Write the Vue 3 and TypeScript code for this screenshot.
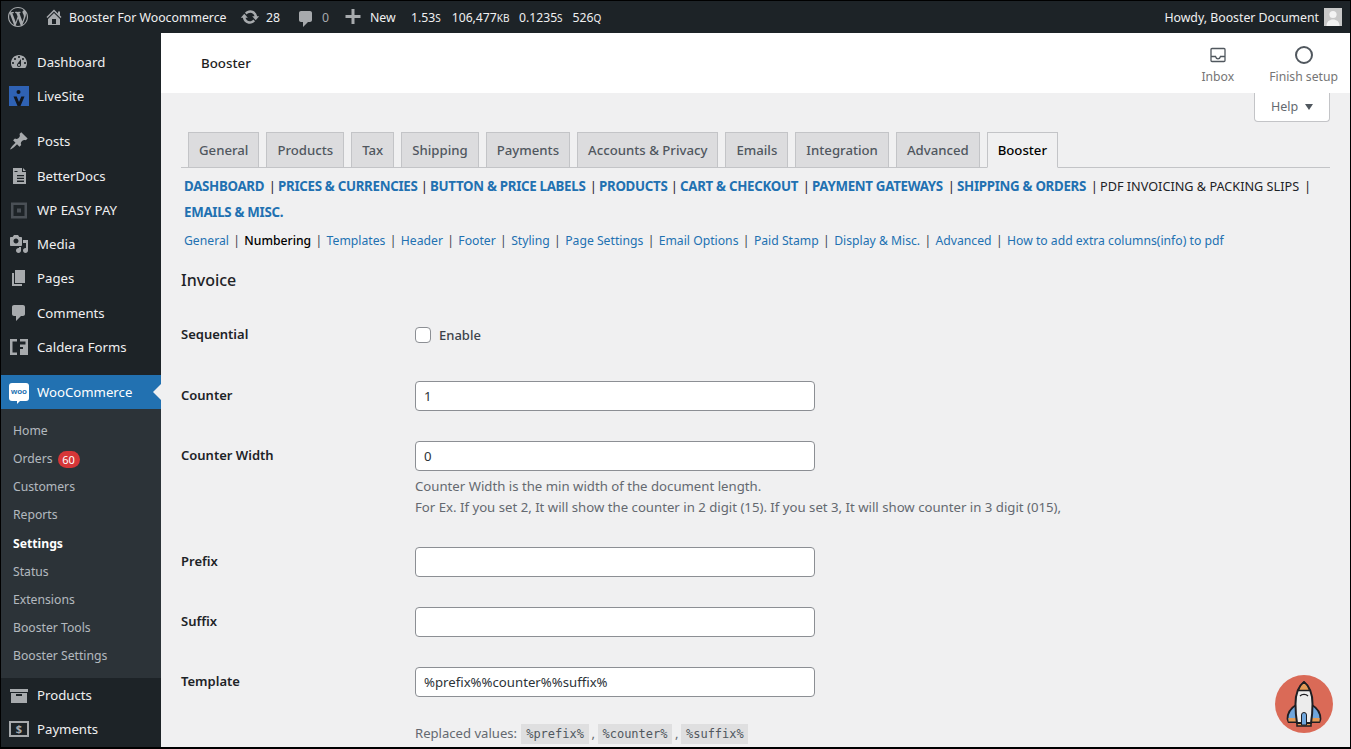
<script setup lang="ts">
const d = {
  dashboard: 'M3.76 16h12.48c1.1-1.37 1.76-3.11 1.76-5 0-4.42-3.58-8-8-8s-8 3.58-8 8c0 1.89.66 3.63 1.76 5zM10 4c.55 0 1 .45 1 1s-.45 1-1 1-1-.45-1-1 .45-1 1-1zM6 6c.55 0 1 .45 1 1s-.45 1-1 1-1-.45-1-1 .45-1 1-1zm8 0c.55 0 1 .45 1 1s-.45 1-1 1-1-.45-1-1 .45-1 1-1zm-5.37 5.55L12 7v6c0 1.1-.9 2-2 2s-2-.9-2-2c0-.57.24-1.08.63-1.45zM4 10c.55 0 1 .45 1 1s-.45 1-1 1-1-.45-1-1 .45-1 1-1zm12 0c.55 0 1 .45 1 1s-.45 1-1 1-1-.45-1-1 .45-1 1-1zm-5 3c0-.55-.45-1-1-1s-1 .45-1 1 .45 1 1 1 1-.45 1-1z',
  pin: 'M10.44 3.02l1.82-1.82 6.36 6.35-1.83 1.82c-1.05-.68-2.48-.57-3.41.36l-.75.75c-.92.93-1.04 2.35-.35 3.41l-1.83 1.82-2.41-2.41-2.8 2.79c-.42.42-3.38 2.71-3.8 2.29s1.86-3.39 2.28-3.81l2.79-2.79L4.1 9.36l1.83-1.82c1.05.69 2.48.57 3.4-.36l.75-.75c.93-.92 1.05-2.35.36-3.41z',
  doc: 'M4 2h9v4h4v12H4V2zm10 0l3 3h-3V2zM8 9v1.300h7V9H8zm0 2.800v1.300h7v-1.300H8zm0 2.800v1.300h7v-1.300H8zM5.500 5v1h3V5h-3z',
  square: 'M2 2.500h16v16H2v-16zm2.500 2.500v11h11V5h-11zm3.500 3.500h4v4H8v-4z',
  media: 'M13 11V4c0-.55-.45-1-1-1h-1.67L9 1H5L3.67 3H2c-.55 0-1 .45-1 1v7c0 .55.45 1 1 1h10c.55 0 1-.45 1-1zM7 4.500c1.38 0 2.500 1.120 2.500 2.500S8.380 9.500 7 9.500 4.500 8.380 4.500 7 5.620 4.500 7 4.500zM14 6h5v10.500c0 1.380-1.120 2.500-2.500 2.500S14 17.880 14 16.500s1.120-2.500 2.500-2.500c.17 0 .34.02.5.05V9h-3V6zm-4 8.050V13h2v3.500c0 1.380-1.120 2.500-2.500 2.500S7 17.880 7 16.500 8.120 14 9.500 14c.17 0 .34.02.5.05z',
  page: 'M6 15V2h10v13H6zm-1 1h8v2H3V5h2v11z',
  comment: 'M5 2h9c1.100 0 2 .9 2 2v7c0 1.100-.9 2-2 2h-2l-5 5v-5H5c-1.100 0-2-.9-2-2V4c0-1.100.9-2 2-2z',
  caldera: 'M1 2h7v2.500H3.500v11H8V18H1V2zm10 0h8v16h-8v-6h3v-2h-3V7.500h5.500v-3H11V2z',
  archive: 'M19 4v3H1V4h18zM2 8h16v10H2V8zm11 3V9H7v2h6z',
}

const top1 = [
  { label: 'Dashboard', path: d.dashboard },
  { label: 'LiveSite', path: '' },
]
const top2 = [
  { label: 'Posts', path: d.pin },
  { label: 'BetterDocs', path: d.doc },
  { label: 'WP EASY PAY', path: d.square, dim: true },
  { label: 'Media', path: d.media },
  { label: 'Pages', path: d.page },
  { label: 'Comments', path: d.comment },
  { label: 'Caldera Forms', path: d.caldera },
]
const sub = ['Home', 'Orders', 'Customers', 'Reports', 'Settings', 'Status', 'Extensions', 'Booster Tools', 'Booster Settings']
const tabs = ['General', 'Products', 'Tax', 'Shipping', 'Payments', 'Accounts & Privacy', 'Emails', 'Integration', 'Advanced', 'Booster']
const sections = [
  { label: 'DASHBOARD', w: 94 },
  { label: 'PRICES & CURRENCIES', w: 152 },
  { label: 'BUTTON & PRICE LABELS', w: 169 },
  { label: 'PRODUCTS', w: 81 },
  { label: 'CART & CHECKOUT', w: 132 },
  { label: 'PAYMENT GATEWAYS', w: 145 },
  { label: 'SHIPPING & ORDERS', w: 143 },
]
const subLinks = ['General', 'Numbering', 'Templates', 'Header', 'Footer', 'Styling', 'Page Settings', 'Email Options', 'Paid Stamp', 'Display & Misc.', 'Advanced', 'How to add extra columns(info) to pdf']
</script>

<template>
  <div class="frame">
    <header class="adminbar">
      <svg class="wp" viewBox="0 0 20 20"><path fill-rule="evenodd" d="M20 10c0-5.51-4.49-10-10-10C4.48 0 0 4.49 0 10c0 5.52 4.48 10 10 10 5.51 0 10-4.48 10-10zM7.78 15.37L4.37 6.22c.55-.02 1.17-.08 1.17-.08.5-.06.44-1.13-.06-1.11 0 0-1.45.11-2.37.11-.18 0-.37 0-.58-.01C4.12 2.69 6.87 1.11 10 1.11c2.33 0 4.45.87 6.05 2.34-.68-.11-1.65.39-1.65 1.58 0 .74.45 1.36.9 2.1.35.61.55 1.36.55 2.46 0 1.49-1.4 5-1.4 5l-3.03-8.37c.54-.02.82-.17.82-.17.5-.05.44-1.25-.06-1.22 0 0-1.44.12-2.38.12-.87 0-2.33-.12-2.33-.12-.5-.03-.56 1.2-.06 1.22l.92.08 1.26 3.41zM17.41 10c.24-.64.74-1.87.43-4.25.7 1.29 1.05 2.71 1.05 4.25 0 3.29-1.73 6.24-4.4 7.78.97-2.59 1.94-5.2 2.92-7.78zM6.1 18.09C3.12 16.65 1.11 13.53 1.11 10c0-1.3.23-2.48.72-3.59C3.25 10.3 4.67 14.2 6.1 18.09zm4.03-6.63l2.58 6.98c-.86.29-1.76.45-2.71.45-.79 0-1.57-.11-2.29-.33.81-2.38 1.62-4.74 2.42-7.1z"/></svg>
      <svg class="bar-ico home" viewBox="0 0 20 20"><path fill-rule="evenodd" d="M16 8.5l1.53 1.53-1.06 1.06L10 4.62l-6.47 6.47-1.06-1.06L10 2.5l4 4v-2h2v4zm-6-2.46l6 5.99V18H4v-5.97zM12 17v-5H8v5h4z"/></svg>
      <span class="site">Booster For Woocommerce</span>
      <svg class="bar-ico upd" viewBox="0 0 20 20"><path d="M10.2 3.28c3.53 0 6.43 2.61 6.92 6h2.08l-3.5 4-3.5-4h2.32c-.45-1.97-2.21-3.44-4.32-3.44-1.45 0-2.73.71-3.54 1.78L4.95 5.66C6.23 4.2 8.11 3.28 10.2 3.28zm-.4 13.44c-3.52 0-6.43-2.61-6.92-6H.8l3.5-4c1.17 1.33 2.33 2.67 3.5 4H5.48c.45 1.97 2.21 3.44 4.32 3.44 1.45 0 2.73-.71 3.54-1.78l1.71 1.95c-1.28 1.46-3.15 2.39-5.25 2.39z"/></svg>
      <span class="count">28</span>
      <svg class="bar-ico cmt" viewBox="0 0 20 20"><path :d="d.comment"/></svg>
      <span class="zero">0</span>
      <svg class="bar-ico plus" viewBox="0 0 20 20"><path d="M17.500 8v3h-6v6h-3v-6h-6V8h6V2h3v6h6z"/></svg>
      <span class="new">New</span>
      <span class="stat s1">1.53<small>S</small></span>
      <span class="stat s2">106,477<small>KB</small></span>
      <span class="stat s3">0.1235<small>S</small></span>
      <span class="stat s4">526<small>Q</small></span>
      <span class="howdy">Howdy, Booster Document</span>
      <svg class="avatar" viewBox="0 0 18 18"><rect width="18" height="18" fill="#c8c8c8"/><circle cx="9" cy="6.500" r="3.600" fill="#f3f3f3"/><path d="M2.500 18c0-4.500 3-6.600 6.500-6.600s6.500 2.100 6.500 6.600z" fill="#f3f3f3"/></svg>
    </header>

    <div class="below">
      <aside class="side">
        <nav class="group">
          <div v-for="m in top1" :key="m.label" class="item">
            <span class="ico">
              <svg v-if="m.path" viewBox="0 0 20 20"><path fill-rule="evenodd" :d="m.path"/></svg>
              <svg v-else class="live" viewBox="0 0 20 20"><rect width="20" height="20" fill="#2f62b4"/><circle cx="9.500" cy="6" r="2" fill="#12161d"/><path d="M4.500 10.500h3.200l2.300 5.500 2.300-5.500h3.200L11.500 20h-3z" fill="#12161d"/></svg>
            </span>
            <span>{{ m.label }}</span>
          </div>
        </nav>
        <nav class="group">
          <div v-for="m in top2" :key="m.label" class="item">
            <span class="ico" :class="{ dim: m.dim }"><svg viewBox="0 0 20 20"><path fill-rule="evenodd" :d="m.path"/></svg></span>
            <span>{{ m.label }}</span>
          </div>
        </nav>
        <nav class="group">
          <div class="item current">
            <span class="woo"><b>woo</b></span>
            <span>WooCommerce</span>
          </div>
          <ul class="submenu">
            <li v-for="s in sub" :key="s" :class="{ on: s === 'Settings' }">
              {{ s }}<span v-if="s === 'Orders'" class="badge">60</span>
            </li>
          </ul>
          <div class="item">
            <span class="ico"><svg viewBox="0 0 20 20"><path fill-rule="evenodd" :d="d.archive"/></svg></span>
            <span>Products</span>
          </div>
          <div class="item">
            <span class="ico pay"><b>$</b></span>
            <span>Payments</span>
          </div>
        </nav>
      </aside>

      <main class="main">
        <div class="wc-head">
          <span class="wc-title">Booster</span>
          <div class="wc-act inbox">
            <svg viewBox="0 0 18 18" width="18" height="18" fill="none" stroke="#50575e" stroke-width="1.300"><path d="M2 3.500a1 1 0 0 1 1-1h12a1 1 0 0 1 1 1v11a1 1 0 0 1-1 1H3a1 1 0 0 1-1-1zM2 10.500h4.500c.5 2 1 2.300 2.500 2.300s2-.3 2.500-2.300H16"/></svg>
            <span>Inbox</span>
          </div>
          <div class="wc-act setup">
            <svg viewBox="0 0 20 20" width="20" height="20" fill="none" stroke="#50575e" stroke-width="2"><circle cx="10" cy="10" r="8"/></svg>
            <span>Finish setup</span>
          </div>
        </div>

        <div class="wrap">
          <div class="help-row"><div class="help">Help<i class="caret"></i></div></div>

          <div class="tabs">
            <span v-for="t in tabs" :key="t" class="tab" :class="{ active: t === 'Booster' }">{{ t }}</span>
          </div>

          <div class="sections">
            <div class="sec-line">
              <span v-for="s in sections" :key="s.label" class="sec-cell" :style="{ width: s.w + 'px' }"><a class="sec">{{ s.label }}</a><span class="pipe">|</span></span>
              <span class="sec-cur">PDF INVOICING &amp; PACKING SLIPS</span><span class="pipe last">|</span>
            </div>
            <div class="sec-line"><a class="sec">EMAILS &amp; MISC.</a></div>
          </div>

          <div class="sublinks">
            <template v-for="(l, i) in subLinks" :key="l">
              <span v-if="i > 0" class="subpipe">|</span>
              <a class="sub" :class="{ cur: l === 'Numbering' }">{{ l }}</a>
            </template>
          </div>

          <h2 class="h2">Invoice</h2>

          <div class="form">
            <div class="row first">
              <label class="lab">Sequential</label>
              <div class="check"><span class="box"></span><span class="en">Enable</span></div>
            </div>
            <div class="row">
              <label class="lab">Counter</label>
              <div class="field">1</div>
            </div>
            <div class="row">
              <label class="lab">Counter Width</label>
              <div>
                <div class="field">0</div>
                <p class="desc">Counter Width is the min width of the document length.<br />For Ex. If you set 2, It will show the counter in 2 digit (15). If you set 3, It will show counter in 3 digit (015),</p>
              </div>
            </div>
            <div class="row">
              <label class="lab">Prefix</label>
              <div class="field"></div>
            </div>
            <div class="row">
              <label class="lab">Suffix</label>
              <div class="field"></div>
            </div>
            <div class="row">
              <label class="lab">Template</label>
              <div>
                <div class="field">%prefix%%counter%%suffix%</div>
                <p class="replaced">Replaced values: <code class="c1">%prefix%</code><span class="comma">,</span><code>%counter%</code><span class="comma">,</span><code>%suffix%</code></p>
              </div>
            </div>
          </div>
        </div>

        <div class="rocket">
          <svg viewBox="0 0 58 58" width="58" height="58">
            <circle cx="29" cy="29" r="29" fill="#da6a57"/>
            <path d="M21 30c-5 3-8.500 8-8.500 14l1 3h9zM37 30c5 3 8.500 8 8.500 14l-1 3h-9z" fill="#6fa6dc" stroke="#1e1e22" stroke-width="1.800" stroke-linejoin="round"/>
            <path d="M13.500 43h9v3.500h-9zM35.500 43h9v3.500h-9z" fill="#e39a55"/>
            <path d="M22 47h14v4H22z" fill="#e39a55" stroke="#1e1e22" stroke-width="1.500"/>
            <path d="M29 7c-6 4.500-8.500 13-8.500 22 0 7 .5 13 1.500 19h14c1-6 1.500-12 1.500-19 0-9-2.500-17.500-8.500-22z" fill="#ececec" stroke="#1e1e22" stroke-width="2" stroke-linejoin="round"/>
            <path d="M29 7c-2.500 2-4.500 5-5.800 8.500h11.600C33.500 12 31.500 9 29 7z" fill="#e39a55" stroke="#1e1e22" stroke-width="1.500" stroke-linejoin="round"/>
            <path d="M25 21c2-2.200 6-2.200 8 0" fill="none" stroke="#1e1e22" stroke-width="1.300"/>
            <path d="M26.500 50V40a2.500 2.500 0 0 1 5 0v10z" fill="#6fa6dc" stroke="#1e1e22" stroke-width="1"/>
          </svg>
        </div>
      </main>
    </div>
  </div>
</template>

<style>
html, body { margin: 0; padding: 0; overflow: hidden; background: #f0f0f1; }
</style>

<style scoped>
.frame {
  box-sizing: border-box;
  width: 1351px;
  height: 749px;
  overflow: hidden;
  border: 1px solid #000;
  border-bottom-width: 2px;
  display: flex;
  flex-direction: column;
  font-family: "Noto Sans", "Open Sans", sans-serif;
  font-size: 13px;
  color: #3c434a;
  background: #f0f0f1;
}
.adminbar {
  height: 32px;
  flex: none;
  background: #1d2327;
  color: #f0f0f1;
  display: flex;
  align-items: center;
  font-size: 12.300px;
  white-space: nowrap;
}
.adminbar svg { fill: #a7aaad; flex: none; }
.wp { width: 20px; height: 20px; margin-left: 7px; }
.bar-ico { width: 20px; height: 20px; }
.home { margin-left: 16px; }
.site { margin-left: 5px; width: 171px; }
.count { margin-left: 6px; width: 30px; }
.upd { width: 20px; }
.cmt { margin-top: 3px; }
.zero { margin-left: 6px; width: 21px; color: #a7aaad; }
.new { margin-left: 7px; width: 41px; }
.stat { font-size: 12.200px; }
.stat small { font-size: 10px; }
.s2 { margin-left: 11px; }
.s3 { margin-left: 9.500px; }
.s4 { margin-left: 10px; }
.howdy { margin-left: auto; margin-right: 5px; }
.avatar { width: 18px; height: 18px; margin-right: 8px; }

.below { flex: 1; min-height: 0; display: flex; }
.side {
  width: 160px;
  flex: none;
  background: #1d2327;
  padding-top: 12px;
  color: #f0f0f1;
  font-size: 13.200px;
}
.group { margin-bottom: 10.500px; }
.item { height: 34.300px; display: flex; align-items: center; }
.ico { width: 36px; height: 20px; padding-left: 8px; box-sizing: border-box; flex: none; display: flex; }
.ico svg { width: 20px; height: 20px; fill: #a7aaad; }
.ico.dim svg { fill: #4a5056; }
.pay b {
  box-sizing: border-box;
  width: 20px;
  height: 16px;
  margin-top: 2px;
  border: 2px solid #a7aaad;
  color: #a7aaad;
  font-size: 11px;
  line-height: 12px;
  text-align: center;
}
.current {
  background: #2271b1;
  color: #fff;
  position: relative;
}
.current::after {
  content: "";
  position: absolute;
  right: 0;
  top: 9px;
  border: 8px solid transparent;
  border-right-color: #f0f0f1;
  border-left-width: 0;
}
.woo {
  width: 20px;
  height: 18px;
  margin: 0 8px 0 8px;
  background: #fff;
  border-radius: 3px;
  display: flex;
  align-items: center;
  justify-content: center;
  position: relative;
}
.woo b { color: #2271b1; font-size: 8px; line-height: 1; font-family: "Liberation Sans", sans-serif; }
.woo::after {
  content: "";
  position: absolute;
  left: 8px;
  bottom: -3px;
  border-top: 3px solid #fff;
  border-right: 3px solid transparent;
}
.submenu {
  list-style: none;
  margin: 0;
  padding: 8px 0 7.500px;
  background: #2c3338;
  font-size: 12.200px;
  color: rgba(240, 246, 252, 0.7);
}
.submenu li { height: 28.150px; line-height: 28px; padding-left: 12px; display: flex; align-items: center; }
.submenu li.on { color: #fff; font-weight: 700; }
.badge {
  margin-left: 5px;
  width: 22px;
  height: 17px;
  border-radius: 9px;
  background: #d63638;
  color: #fff;
  font-size: 11px;
  line-height: 17px;
  text-align: center;
}

.main { flex: 1; min-width: 0; position: relative; }
.wc-head {
  height: 60px;
  background: #fff;
  display: flex;
  align-items: flex-start;
}
.wc-title { margin: 21px 0 0 40px; color: #1e1e1e; font-size: 13.300px; font-weight: 500; flex: 1; line-height: 18px; }
.wc-act {
  display: flex;
  flex-direction: column;
  align-items: center;
  color: #757575;
  font-size: 12.200px;
  padding-top: 12px;
}
.wc-act span { line-height: 18px; }
.wc-act.inbox { margin-right: 35px; padding-top: 13px; }
.wc-act.inbox span { margin-top: 4px; }
.wc-act.setup { margin-right: 12px; }
.wc-act.setup span { margin-top: 3px; }

.wrap { padding: 0 20px 0 20px; }
.help-row { display: flex; justify-content: flex-end; height: 29px; }
.help {
  box-sizing: border-box;
  width: 76px;
  height: 29px;
  padding: 0 0 2px 16px;
  background: #fff;
  border: 1px solid #c3c4c7;
  border-top: 0;
  border-radius: 0 0 4px 4px;
  color: #646970;
  font-size: 12.500px;
  display: flex;
  align-items: center;
}
.caret {
  margin-left: 7px;
  margin-top: 1px;
  border-top: 6px solid #50575e;
  border-left: 4px solid transparent;
  border-right: 4px solid transparent;
}
.tabs {
  margin-top: 10px;
  padding-left: 7px;
  height: 35px;
  border-bottom: 1px solid #c3c4c7;
  display: flex;
  gap: 7px;
  align-items: flex-start;
}
.tab {
  box-sizing: border-box;
  height: 36px;
  padding: 0 10px;
  background: #dcdcde;
  border: 1px solid #c3c4c7;
  color: #50575e;
  font-size: 13.200px;
  font-weight: 500;
  line-height: 34px;
}
.tab.active { background: #f0f0f1; border-bottom-color: #f0f0f1; color: #000; }
.sections { margin-top: 5px; padding-left: 3px; }
.sec-line { height: 26px; line-height: 26px; display: flex; white-space: nowrap; }
.sec-cell { display: flex; justify-content: space-between; flex: none; padding-right: 2px; box-sizing: border-box; }
.sec { color: #2271b1; font-weight: 700; font-size: 13.300px; letter-spacing: -0.3px; }
.pipe { color: #1d2327; font-size: 13px; }
.pipe.last { margin-left: 5px; }
.sec-cur { color: #1d2327; font-size: 12.680px; line-height: 27px; }
.sublinks { margin-top: 2px; padding-left: 3px; height: 28px; line-height: 28px; display: flex; white-space: nowrap; font-size: 12.200px; }
.sub { color: #2271b1; }
.sub.cur { color: #000; font-weight: 500; }
.subpipe { color: #3c434a; margin: 0 4.350px; }
.h2 { margin: 13px 0 0; color: #1d2327; font-size: 16px; font-weight: 500; line-height: 24px; }
.form { margin-top: 28px; }
.row { display: grid; grid-template-columns: 234px 1fr; margin-bottom: 30px; }
.row.first { margin-bottom: 31px; }
.lab { color: #1d2327; font-size: 13px; font-weight: 600; line-height: 28px; }
.check { height: 30px; display: flex; align-items: center; }
.box {
  box-sizing: border-box;
  width: 16px;
  height: 16px;
  background: #fff;
  border: 1px solid #8c8f94;
  border-radius: 4px;
}
.en { margin-left: 8px; font-weight: 500; color: #3c434a; }
.field {
  box-sizing: border-box;
  width: 400px;
  height: 30px;
  background: #fff;
  border: 1px solid #8c8f94;
  border-radius: 4px;
  padding: 0 8px;
  line-height: 28px;
  font-size: 13.200px;
  color: #2c3338;
}
.desc { margin: 5px 0 -1px; line-height: 21px; color: #646970; font-size: 13.200px; white-space: nowrap; }
.replaced { margin: 26px 0 0; color: #646970; font-size: 13.100px; line-height: 20px; white-space: nowrap; }
.comma { margin: 0 2.800px; }
code {
  display: inline-block;
  background: rgba(0, 0, 0, 0.07);
  padding: 0 4.700px;
  font-family: "DejaVu Sans Mono", "Liberation Mono", monospace;
  font-size: 12px;
  line-height: 20px;
  color: #50575e;
}
code.c1 { margin-left: 1px; }
.rocket {
  position: absolute;
  right: 17px;
  bottom: 14px;
  width: 58px;
  height: 58px;
}
</style>
